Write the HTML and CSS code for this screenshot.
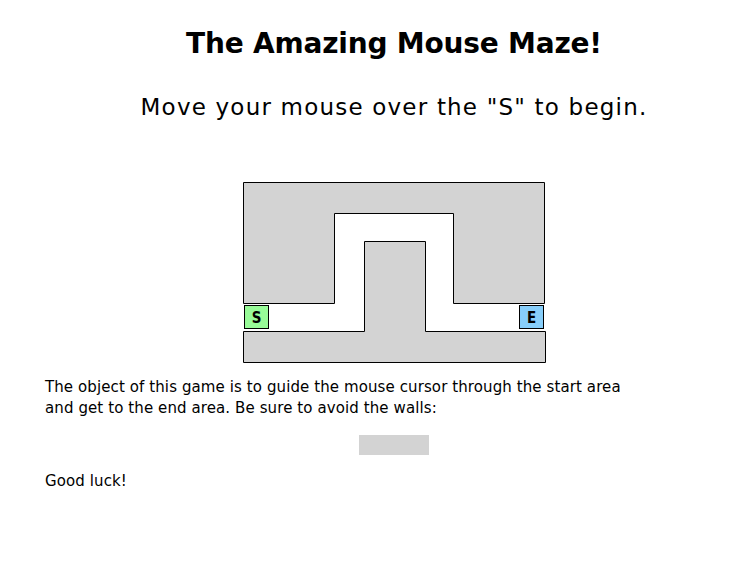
FILE: index.html
```html
<!DOCTYPE html>
<html>
<head>
<meta charset="utf-8">
<title>The Amazing Mouse Maze!</title>
<link rel="stylesheet" href="styles.css">
</head>
<body>
<div class="page">
  <h1 class="title">The Amazing Mouse Maze!</h1>
  <h2 class="subtitle">Move your mouse over the "S" to begin.</h2>
  <div class="maze-wrap">
    <svg class="maze" width="304" height="182" viewBox="0 0 304 182" xmlns="http://www.w3.org/2000/svg">
      <polygon class="wall" points="0.5,0.5 301.5,0.5 301.5,121.5 210.5,121.5 210.5,31.5 91.5,31.5 91.5,121.5 0.5,121.5"/>
      <polygon class="wall" points="121.5,59.5 182.5,59.5 182.5,149.5 302.5,149.5 302.5,180.5 0.5,180.5 0.5,149.5 121.5,149.5"/>
      <rect class="start" x="1.5" y="123.5" width="24" height="23"/>
      <text class="mark" x="13.5" y="141">S</text>
      <rect class="end" x="276.5" y="123.5" width="24" height="23"/>
      <text class="mark" x="288.5" y="141">E</text>
    </svg>
  </div>
  <p class="info">The object of this game is to guide the mouse cursor through the start area<br>and get to the end area. Be sure to avoid the walls:</p>
  <div class="wall-sample"></div>
  <p class="luck">Good luck!</p>
</div>
</body>
</html>
```
FILE: styles.css
```css
html, body {
  margin: 0;
  padding: 0;
  background: #ffffff;
}

body {
  font-family: "DejaVu Sans", "Liberation Sans", sans-serif;
  color: #000000;
}

.page {
  margin-left: 45px;
  width: 698px;
}

.title {
  font-size: 28px;
  font-weight: bold;
  text-align: center;
  line-height: 36px;
  letter-spacing: -0.2px;
  margin: 26px 0 0;
}

.subtitle {
  font-size: 23px;
  font-weight: normal;
  text-align: center;
  line-height: 30px;
  letter-spacing: 1.2px;
  margin: 30px 0 0;
}

.maze-wrap {
  display: flex;
  justify-content: center;
  padding-left: 2px;
  margin-top: 60px;
}

.maze {
  display: block;
}

.wall {
  fill: #d3d3d3;
  stroke: #000000;
  stroke-width: 1;
}

.start {
  fill: #98fb98;
  stroke: #000000;
  stroke-width: 1;
}

.end {
  fill: #87cefa;
  stroke: #000000;
  stroke-width: 1;
}

.mark {
  font-family: "DejaVu Sans Condensed", "Liberation Sans Narrow", sans-serif;
  font-weight: bold;
  font-size: 15px;
  text-anchor: middle;
  fill: #000000;
}

.info {
  font-size: 15px;
  line-height: 21px;
  letter-spacing: 0.1px;
  margin: 13px 0 0;
}

.wall-sample {
  width: 70px;
  height: 20px;
  background: #d3d3d3;
  margin: 16px auto 0;
}

.luck {
  font-size: 15px;
  line-height: 21px;
  letter-spacing: 0.1px;
  margin: 16px 0 0;
}
```
